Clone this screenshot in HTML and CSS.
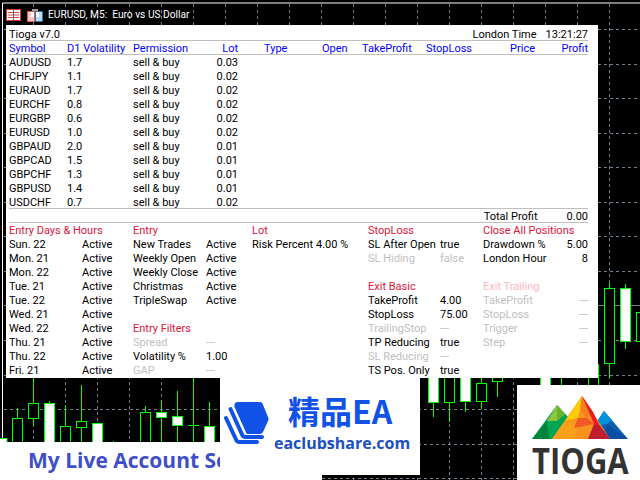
FILE: index.html
```html
<!DOCTYPE html>
<html lang="en">
<head>
<meta charset="utf-8">
<title>Tioga v7.0</title>
<link rel="stylesheet" href="styles.css">
</head>
<body>
<div class="screen">
  <svg class="chart" width="640" height="480" viewBox="0 0 640 480">
    <path class="frame" d="M2.5 480V3H640"/>
    <path class="grid" d="M4 29.5H640M4 64.5H640M4 98.5H640M4 133.5H640M4 167.5H640M4 202.5H640M4 236.5H640M4 271.5H640M4 340.5H640M4 375.5H640M4 409.5H640M4 444.5H640M4 478.5H640M33.5 4V480M65.5 4V480M97.5 4V480M129.5 4V480M161.5 4V480M193.5 4V480M225.5 4V480M257.5 4V480M289.5 4V480M321.5 4V480M353.5 4V480M385.5 4V480M417.5 4V480M449.5 4V480M481.5 4V480M513.5 4V480M545.5 4V480M577.5 4V480M609.5 4V480"/>
    <path class="price" d="M4 305.5H640"/>
    <path class="wick" d="M17.5 408V418M33.5 378V425M49.5 401V403M65.5 405V426M81.5 385V442M113.5 441V442M145.5 406V412M161.5 400V442M177.5 391V442M188 425.500H199M193.5 378V442M209.5 402V426M433.5 403V417M449.5 403V422M465.5 402V412M481.5 378V409M497.5 382V397M561.5 378V385M588.5 378V385M598.5 364V385M609.5 283V378M625.5 342V349M625.5 284V288"/>
    <rect class="body fill" x="-2" y="438.5" width="9" height="8"/>
    <rect class="body" x="12.5" y="418.5" width="10" height="30"/>
    <rect class="body" x="28.5" y="403.5" width="10" height="15"/>
    <rect class="body fill" x="44.5" y="403.5" width="10" height="45"/>
    <rect class="body" x="60.5" y="426.5" width="10" height="20"/>
    <rect class="body" x="76.5" y="421.5" width="10" height="6"/>
    <rect class="body fill" x="92.5" y="423.5" width="10" height="25"/>
    <rect class="body" x="140.5" y="412.5" width="10" height="35"/>
    <rect class="body fill" x="156.5" y="412.5" width="10" height="5"/>
    <rect class="body fill" x="172.5" y="416.5" width="10" height="9"/>
    <rect class="body fill" x="204.5" y="426.5" width="10" height="20"/>
    <rect class="body fill" x="428.5" y="370.5" width="10" height="32"/>
    <rect class="body" x="444.5" y="370.5" width="10" height="32"/>
    <rect class="body fill" x="460.5" y="370.5" width="10" height="31"/>
    <rect class="body" x="476.5" y="383.5" width="10" height="18"/>
    <rect class="body" x="492.5" y="370.5" width="10" height="11"/>
    <rect class="body fill" x="540.5" y="370.5" width="10" height="30"/>
    <rect class="body" x="604.5" y="288.5" width="10" height="75"/>
    <rect class="body fill" x="620.5" y="288.5" width="10" height="53"/>
    <rect class="body" x="636.5" y="312.5" width="10" height="29"/>
  </svg>

  <header class="titlebar">
    <svg class="ico" width="15" height="12" viewBox="0 0 15 12">
      <rect x=".5" y=".5" width="14" height="11" fill="#fff" stroke="#d8382c"/>
      <path d="M2 3.500H7M8 3.500H13M2 6H7M8 6H13M2 8.500H7M8 8.500H13" stroke="#e0453a"/>
      <path d="M7.500 1V11" stroke="#3a6fb8"/>
    </svg>
    <svg class="ico" width="16" height="13" viewBox="0 0 16 13">
      <rect x="5" y="0" width="6" height="3" fill="#a0a0a0"/>
      <path d="M.5 2.500H7.500V12.500H.5Z" fill="#f8c8c0" stroke="#d8604c"/>
      <path d="M8.500 2.500H15.500V12.500H8.500Z" fill="#b8dcf4" stroke="#2c6cb0"/>
      <rect x="4" y="3" width="3" height="5" fill="#fff"/>
      <rect x="9" y="3" width="3" height="5" fill="#fff"/>
    </svg>
    <span class="title-text">EURUSD, M5:&nbsp; Euro vs US Dollar</span>
  </header>

  <main class="panel">
    <div class="top-row"><span>Tioga v7.0</span><span class="clock"><span>London Time</span><span>13:21:27</span></span></div>
    <div class="trow thead">
      <span>Symbol</span><span>D1 Volatility</span><span>Permission</span><span class="r">Lot</span><span class="type">Type</span><span>Open</span><span>TakeProfit</span><span>StopLoss</span><span class="r">Price</span><span class="r">Profit</span>
    </div>
    <div class="tbody">
      <div class="trow"><span>AUDUSD</span><span>1.7</span><span>sell &amp; buy</span><span class="r">0.03</span></div>
      <div class="trow"><span>CHFJPY</span><span>1.1</span><span>sell &amp; buy</span><span class="r">0.02</span></div>
      <div class="trow"><span>EURAUD</span><span>1.7</span><span>sell &amp; buy</span><span class="r">0.02</span></div>
      <div class="trow"><span>EURCHF</span><span>0.8</span><span>sell &amp; buy</span><span class="r">0.02</span></div>
      <div class="trow"><span>EURGBP</span><span>0.6</span><span>sell &amp; buy</span><span class="r">0.02</span></div>
      <div class="trow"><span>EURUSD</span><span>1.0</span><span>sell &amp; buy</span><span class="r">0.02</span></div>
      <div class="trow"><span>GBPAUD</span><span>2.0</span><span>sell &amp; buy</span><span class="r">0.01</span></div>
      <div class="trow"><span>GBPCAD</span><span>1.5</span><span>sell &amp; buy</span><span class="r">0.01</span></div>
      <div class="trow"><span>GBPCHF</span><span>1.3</span><span>sell &amp; buy</span><span class="r">0.01</span></div>
      <div class="trow"><span>GBPUSD</span><span>1.4</span><span>sell &amp; buy</span><span class="r">0.01</span></div>
      <div class="trow"><span>USDCHF</span><span>0.7</span><span>sell &amp; buy</span><span class="r">0.02</span></div>
    </div>
    <div class="total"><span>Total Profit</span><span>0.00</span></div>
    <div class="settings">
      <section class="col c1">
        <div class="hd">Entry Days &amp; Hours</div>
        <div class="kv"><span>Sun. 22</span><span>Active</span></div>
        <div class="kv"><span>Mon. 21</span><span>Active</span></div>
        <div class="kv"><span>Mon. 22</span><span>Active</span></div>
        <div class="kv"><span>Tue. 21</span><span>Active</span></div>
        <div class="kv"><span>Tue. 22</span><span>Active</span></div>
        <div class="kv"><span>Wed. 21</span><span>Active</span></div>
        <div class="kv"><span>Wed. 22</span><span>Active</span></div>
        <div class="kv"><span>Thu. 21</span><span>Active</span></div>
        <div class="kv"><span>Thu. 22</span><span>Active</span></div>
        <div class="kv"><span>Fri. 21</span><span>Active</span></div>
      </section>
      <section class="col c2">
        <div class="hd">Entry</div>
        <div class="kv"><span>New Trades</span><span>Active</span></div>
        <div class="kv"><span>Weekly Open</span><span>Active</span></div>
        <div class="kv"><span>Weekly Close</span><span>Active</span></div>
        <div class="kv"><span>Christmas</span><span>Active</span></div>
        <div class="kv"><span>TripleSwap</span><span>Active</span></div>
        <div class="kv blank"></div>
        <div class="hd">Entry Filters</div>
        <div class="kv off"><span>Spread</span><span>---</span></div>
        <div class="kv"><span>Volatility %</span><span>1.00</span></div>
        <div class="kv off"><span>GAP</span><span>---</span></div>
      </section>
      <section class="col c3">
        <div class="hd">Lot</div>
        <div class="kv"><span>Risk Percent</span><span>4.00 %</span></div>
      </section>
      <section class="col c4">
        <div class="hd">StopLoss</div>
        <div class="kv"><span>SL After Open</span><span>true</span></div>
        <div class="kv off"><span>SL Hiding</span><span>false</span></div>
        <div class="kv blank"></div>
        <div class="hd">Exit Basic</div>
        <div class="kv"><span>TakeProfit</span><span>4.00</span></div>
        <div class="kv"><span>StopLoss</span><span>75.00</span></div>
        <div class="kv off"><span>TrailingStop</span><span>---</span></div>
        <div class="kv"><span>TP Reducing</span><span>true</span></div>
        <div class="kv off"><span>SL Reducing</span><span>---</span></div>
        <div class="kv"><span>TS Pos. Only</span><span>true</span></div>
      </section>
      <section class="col c5">
        <div class="hd">Close All Positions</div>
        <div class="kv"><span>Drawdown %</span><span>5.00</span></div>
        <div class="kv"><span>London Hour</span><span>8</span></div>
        <div class="kv blank"></div>
        <div class="hd pink">Exit Trailing</div>
        <div class="kv off"><span>TakeProfit</span><span>---</span></div>
        <div class="kv off"><span>StopLoss</span><span>---</span></div>
        <div class="kv off"><span>Trigger</span><span>---</span></div>
        <div class="kv off"><span>Step</span><span>---</span></div>
      </section>
    </div>
  </main>

  <div class="promo"><span>My Live Account Se</span></div>

  <aside class="ea-logo">
    <svg class="ea-mark" width="46" height="46" viewBox="0 0 46 46">
      <path d="M11 5.500Q11.500 4 13 4H36Q38 4 38.500 5.500L44 19Q45 21 44 23L39 34Q38 36 36 36H24Q22.500 36 22 34.500L10.500 9Q10 7 11 5.500Z" fill="#1052e6"/>
      <path d="M6.500 11L18 36.500Q19 39 21.500 39H38" fill="none" stroke="#1052e6" stroke-width="4" stroke-linecap="round"/>
      <path d="M2 20L12 41.500Q13 44 15.500 44H33" fill="none" stroke="#1052e6" stroke-width="4" stroke-linecap="round"/>
    </svg>
    <div class="ea-zh">精品EA</div>
    <div class="ea-url">eaclubshare.com</div>
  </aside>

  <aside class="tioga">
    <svg class="tioga-mark" width="96" height="45" viewBox="0 0 96 45">
      <polygon points="25,9 39,24 29,43 0,43" fill="#00a651"/>
      <polygon points="25,9 15,25 25,25 33,18" fill="#8cc63f"/>
      <polygon points="15,25 0,43 17,43" fill="#00843d"/>
      <polygon points="25,9 33,18 25,25" fill="#6ab42d"/>
      <polygon points="72,15 96,43 60,43 62,30" fill="#0f5fb0"/>
      <polygon points="72,15 62,30 75,28 80,24" fill="#0095da"/>
      <polygon points="75,28 96,43 72,43" fill="#0b4ea2"/>
      <polygon points="50,0 78,43 20,43" fill="#f7931e"/>
      <polygon points="50,0 33,25 46,22 48,14" fill="#ffcb05"/>
      <polygon points="33,25 20,43 42,43 46,30" fill="#f9a11b"/>
      <polygon points="50,0 48,14 55,22 61,16" fill="#f58220"/>
      <polygon points="46,22 42,32 62,28 55,22" fill="#f15a24"/>
      <polygon points="50,0 61,16 68,30 78,43 60,43 62,28" fill="#ed1c24"/>
      <polygon points="62,28 56,43 78,43 68,30" fill="#be1e2d"/>
    </svg>
    <div class="tioga-word">TIOGA</div>
  </aside>
</div>
</body>
</html>
```

FILE: styles.css
```css
* { box-sizing: border-box; }
html, body { margin: 0; padding: 0; background: #000; }
body { width: 640px; height: 480px; overflow: hidden; }
.screen {
  position: relative;
  width: 640px;
  height: 480px;
  overflow: hidden;
  background: #000;
  font: 11px/16px Roboto, "Noto Sans", sans-serif;
  color: #000;
}
.chart { position: absolute; inset: 0; display: block; }
.frame { fill: none; stroke: #fff; stroke-width: 1; }
.grid { fill: none; stroke: #708090; stroke-width: 1; stroke-dasharray: 3 3; }
.price { fill: none; stroke: #708090; stroke-width: 1; }
.wick { fill: none; stroke: #0f0; stroke-width: 1; }
.body { fill: #000; stroke: #0f0; stroke-width: 1; }
.body.fill { fill: #fff; }

.titlebar {
  position: absolute;
  left: 6px;
  top: 8px;
  height: 14px;
  display: flex;
  align-items: center;
  color: #fff;
}
.ico { display: block; flex: none; margin-right: 6px; }
.ico + .ico { margin-right: 5px; }
.title-text { font-size: 10.2px; white-space: pre; }

.panel {
  position: absolute;
  left: 6px;
  top: 25px;
  width: 592px;
  height: 353px;
  padding: 2px 10px 0 3px;
  background: #fff;
}
.top-row {
  display: flex;
  justify-content: space-between;
  height: 14px;
  border-bottom: 1px solid #c0c0c0;
}
.clock { display: flex; gap: 9px; }
.trow {
  display: grid;
  grid-template-columns: 58px 66px 67px 38px 84px 40px 64px 54px 55px 53px;
  height: 14px;
  white-space: nowrap;
}
.r { text-align: right; }
.type { padding-left: 26px; }
.thead { color: #0000ff; border-bottom: 1px solid #c0c0c0; }
.tbody { height: 154px; border-bottom: 1px solid #c0c0c0; }
.total {
  display: flex;
  justify-content: flex-end;
  gap: 29px;
  height: 14px;
  border-bottom: 1px solid #c0c0c0;
}
.settings {
  display: grid;
  grid-template-columns: 124px 119px 116px 115px 105px;
}
.col { min-width: 0; }
.hd { height: 14px; color: #dc143c; white-space: nowrap; }
.hd.pink { color: #ffb6c1; }
.kv { display: grid; height: 14px; white-space: nowrap; }
.c1 .kv, .c2 .kv { grid-template-columns: 73px auto; }
.c3 .kv { grid-template-columns: 64px auto; }
.c4 .kv { grid-template-columns: 72px auto; }
.c5 .kv { grid-template-columns: 1fr auto; }
.off { color: #c0c0c0; }

.promo {
  position: absolute;
  left: 0;
  top: 442px;
  width: 322px;
  height: 38px;
  padding-left: 28px;
  background: #fff;
  color: #3f4fc8;
  font: 700 21px/37px "Open Sans", sans-serif;
  white-space: nowrap;
}
.ea-logo {
  position: absolute;
  left: 220px;
  top: 378px;
  width: 200px;
  height: 97px;
  background: #fff;
  color: #1052e6;
}
.ea-mark { position: absolute; left: 4px; top: 20px; }
.ea-zh {
  position: absolute;
  left: 68px;
  top: 10px;
  font: 700 32px/44px "Noto Sans CJK SC", sans-serif;
  white-space: nowrap;
}
.ea-url {
  position: absolute;
  left: 54px;
  top: 54px;
  color: #1a50c0;
  font: 700 16px/22px "Open Sans", sans-serif;
  white-space: nowrap;
}
.tioga {
  position: absolute;
  left: 517px;
  top: 385px;
  width: 123px;
  height: 95px;
  background: #fff;
}
.tioga-mark { position: absolute; left: 15px; top: 11px; }
.tioga-word {
  position: absolute;
  left: 15px;
  top: 58px;
  color: #333;
  font: 700 31px/30px "Open Sans", sans-serif;
  transform: scaleY(1.16);
  transform-origin: left top;
}
```
